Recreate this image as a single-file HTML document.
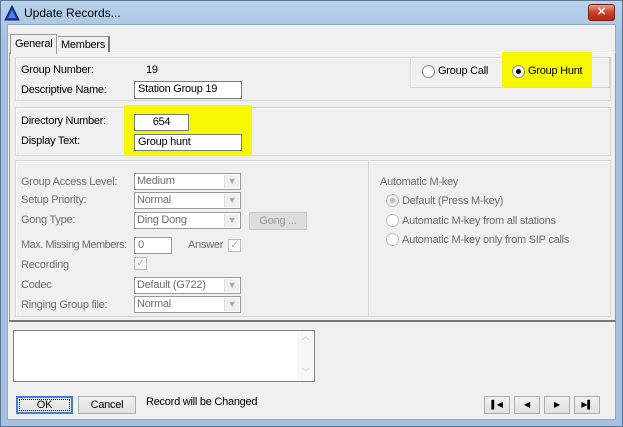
<!DOCTYPE html>
<html><head><meta charset="utf-8"><style>
*{box-sizing:border-box;margin:0;padding:0}
body{width:623px;height:427px;overflow:hidden;background:#a9c4e0;font-family:"Liberation Sans",sans-serif;font-size:11px;letter-spacing:-0.25px;color:#000;position:relative}
.a{position:absolute;white-space:nowrap}
.frame{position:absolute;left:0;top:0;width:623px;height:427px;background:linear-gradient(#b9d1ea,#a6c2e2 40px,#a6c2e2);border:1px solid #5f7892}
.client{position:absolute;left:7px;top:24px;width:609px;height:396px;background:#f0f0f0;border:1px solid #8fa8c3}
.box{position:absolute;border:1px solid #d5d5d5;box-shadow:inset 1px 1px 0 #fff}
.inp{position:absolute;background:#fff;border:1px solid #7a7a7a;padding-left:3px;line-height:15px}
.cmb{position:absolute;background:#fff;border:1px solid #9a9a9a;padding-left:2px;line-height:15px;color:#6d6d6d}
.cmb:after{content:"▼";position:absolute;right:1px;top:1px;width:14px;height:13px;background:#f0f0f0;border-left:1px solid #ddd;font-size:9px;color:#aaa;text-align:center;line-height:13px}
.g{color:#6d6d6d}
.rad{position:absolute;width:13px;height:13px;border-radius:50%;border:1px solid #8a8a8a;background:#fff}
.btn{position:absolute;background:linear-gradient(#f2f2f2,#e0e0e0);border:1px solid #adadad;text-align:center;line-height:16px}
.yel{position:absolute;background:#f7f700}
</style></head><body>
<div class="frame"></div>
<svg class="a" style="left:4px;top:5px" width="16" height="16"><polygon points="8,1 15,15 1,15" fill="#1b3fb0" stroke="#0a1a60"/><polygon points="8,5 12,13 4,13" fill="#5a7de0"/></svg>
<div class="a" style="left:24px;top:6px;font-size:12px;letter-spacing:0">Update Records...</div>
<div class="a" style="left:588px;top:4px;width:27px;height:17px;border-radius:3px;background:linear-gradient(#e8a08a,#c7402a 50%,#b72a10);border:1px solid #6b2515;color:#fff;font-weight:bold;text-align:center;line-height:15px;font-size:11px">✕</div>
<div class="client"></div>
<div class="a" style="left:10px;top:34px;width:47px;height:20px;background:#f0f0f0;border:1px solid #999;border-bottom:none;z-index:2;padding:3px 0 0 4px">General</div>
<div class="a" style="left:57px;top:36px;width:53px;height:17px;background:#f0f0f0;border:1px solid #999;border-left:1px solid #fff;border-right:2px solid #777;padding:2px 0 0 3px">Members</div>
<div class="a" style="left:9px;top:52px;width:607px;height:270px;border:1px solid #999;border-top:1px solid #fff;border-right:1px solid #999;border-bottom:2px solid #777"></div>
<div class="box" style="left:15px;top:57px;width:596px;height:44px"></div>
<div class="box" style="left:410px;top:57px;width:200px;height:31px"></div>
<div class="yel" style="left:502px;top:52px;width:90px;height:35px"></div>
<div class="a" style="left:21px;top:64px">Group Number:</div>
<div class="a" style="left:146px;top:64px">19</div>
<div class="a" style="left:21px;top:84px">Descriptive Name:</div>
<div class="inp" style="left:134px;top:81px;width:108px;height:18px">Station Group 19</div>
<div class="rad" style="left:422px;top:65px"></div><div class="a" style="left:438px;top:65px">Group Call</div>
<div class="rad" style="left:512px;top:65px"><div style="position:absolute;left:3px;top:3px;width:5px;height:5px;border-radius:50%;background:#000"></div></div><div class="a" style="left:528px;top:65px">Group Hunt</div>
<div class="box" style="left:15px;top:107px;width:596px;height:49px"></div>
<div class="yel" style="left:124px;top:105px;width:128px;height:51px"></div>
<div class="a" style="left:21px;top:115px">Directory Number:</div>
<div class="inp" style="left:134px;top:114px;width:55px;height:17px;text-align:center;padding:0">654</div>
<div class="a" style="left:21px;top:135px">Display Text:</div>
<div class="inp" style="left:134px;top:134px;width:108px;height:17px">Group hunt</div>
<div class="box" style="left:15px;top:160px;width:596px;height:157px"></div>
<div class="a" style="left:368px;top:161px;width:1px;height:155px;background:#d5d5d5"></div>
<div class="a g" style="left:21px;top:176px">Group Access Level:</div><div class="cmb" style="left:134px;top:173px;width:107px;height:17px">Medium</div>
<div class="a g" style="left:21px;top:194px">Setup Priority:</div><div class="cmb" style="left:134px;top:192px;width:107px;height:17px">Normal</div>
<div class="a g" style="left:21px;top:214px">Gong Type:</div><div class="cmb" style="left:134px;top:212px;width:107px;height:17px">Ding Dong</div>
<div class="btn g" style="left:249px;top:212px;width:58px;height:18px;background:#ddd;border-color:#c8c8c8;color:#999">Gong ...</div>
<div class="a g" style="left:21px;top:239px;letter-spacing:-0.5px">Max. Missing Members:</div><div class="inp g" style="left:134px;top:237px;width:38px;height:17px;border-color:#999">0</div>
<div class="a g" style="left:188px;top:239px">Answer</div><div class="a" style="left:228px;top:239px;width:13px;height:13px;border:1px solid #bbb;background:#f7f7f7;color:#aaa;font-size:10px;line-height:11px;text-align:center">✓</div>
<div class="a g" style="left:21px;top:259px">Recording</div><div class="a" style="left:134px;top:257px;width:13px;height:13px;border:1px solid #bbb;background:#f7f7f7;color:#aaa;font-size:10px;line-height:11px;text-align:center">✓</div>
<div class="a g" style="left:21px;top:279px">Codec</div><div class="cmb" style="left:134px;top:277px;width:107px;height:17px">Default (G722)</div>
<div class="a g" style="left:21px;top:299px">Ringing Group file:</div><div class="cmb" style="left:134px;top:296px;width:107px;height:17px">Normal</div>
<div class="a g" style="left:380px;top:176px">Automatic M-key</div>
<div class="rad" style="left:386px;top:194px;border-color:#bbb;background:#eee"><div style="position:absolute;left:3px;top:3px;width:5px;height:5px;border-radius:50%;background:#bbb"></div></div><div class="a g" style="left:402px;top:195px">Default (Press M-key)</div>
<div class="rad" style="left:386px;top:214px;border-color:#bbb"></div><div class="a g" style="left:402px;top:215px">Automatic M-key from all stations</div>
<div class="rad" style="left:386px;top:233px;border-color:#bbb"></div><div class="a g" style="left:402px;top:234px">Automatic M-key only from SIP calls</div>
<div class="a" style="left:13px;top:330px;width:302px;height:52px;background:#fff;border:1px solid #828282"></div>
<div class="a" style="left:297px;top:331px;width:17px;height:50px;background:#f7f7f7;color:#bbb;font-size:8px;text-align:center;line-height:12px">︿<br><br><br>﹀</div>
<div class="btn" style="left:16px;top:396px;width:57px;height:18px;border:2px solid #3c7fd6;outline:1px dotted #000;outline-offset:-4px;line-height:14px">OK</div>
<div class="btn" style="left:78px;top:396px;width:58px;height:18px">Cancel</div>
<div class="a" style="left:146px;top:396px">Record will be Changed</div>
<div class="btn" style="left:484px;top:396px;width:26px;height:18px;font-size:8px">▌◀</div>
<div class="btn" style="left:514px;top:396px;width:26px;height:18px;font-size:8px">◀</div>
<div class="btn" style="left:544px;top:396px;width:26px;height:18px;font-size:8px">▶</div>
<div class="btn" style="left:574px;top:396px;width:26px;height:18px;font-size:8px">▶▌</div>
</body></html>
